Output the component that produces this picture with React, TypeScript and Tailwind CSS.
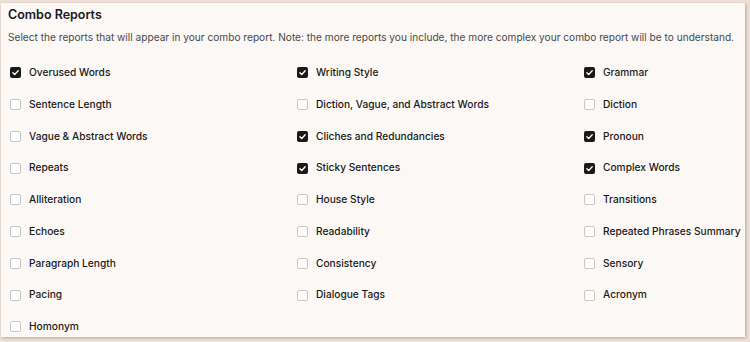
const reports: [string, boolean][] = [
  ["Overused Words", true],
  ["Writing Style", true],
  ["Grammar", true],
  ["Sentence Length", false],
  ["Diction, Vague, and Abstract Words", false],
  ["Diction", false],
  ["Vague & Abstract Words", false],
  ["Cliches and Redundancies", true],
  ["Pronoun", true],
  ["Repeats", false],
  ["Sticky Sentences", true],
  ["Complex Words", true],
  ["Alliteration", false],
  ["House Style", false],
  ["Transitions", false],
  ["Echoes", false],
  ["Readability", false],
  ["Repeated Phrases Summary", false],
  ["Paragraph Length", false],
  ["Consistency", false],
  ["Sensory", false],
  ["Pacing", false],
  ["Dialogue Tags", false],
  ["Acronym", false],
  ["Homonym", false],
];

function Box({ checked }: { checked: boolean }) {
  if (checked) {
    return (
      <span className="flex h-[11px] w-[11px] items-center justify-center rounded-[2px] bg-[#1a1a1a]">
        <svg viewBox="0 0 12 12" className="h-[9px] w-[9px]" fill="none">
          <path d="M2.5 6.2 5 8.6 9.6 3.6" stroke="white" strokeWidth="1.8" strokeLinecap="round" strokeLinejoin="round" />
        </svg>
      </span>
    );
  }
  return <span className="h-[11px] w-[11px] rounded-[2px] border border-[#c9c6c3] bg-white" />;
}

export default function App() {
  return (
    <div className="h-[342px] w-[750px] overflow-hidden bg-[#eee0d6] font-['Inter',sans-serif]">
      <div className="ml-px mt-[3px] h-[334px] w-[744px] bg-[#fcf8f5] pl-[7px] shadow-[1px_1px_3px_rgba(0,0,0,0.25)]">
        <h2 className="pt-[2px] text-[12.5px] font-semibold leading-[20px] text-[#1a1a1a]">Combo Reports</h2>
        <p className="mt-[3px] whitespace-nowrap text-[10.15px] leading-[18px] text-[#4a4a4a]">
          Select the reports that will appear in your combo report. Note: the more reports you include, the more complex your combo report will be to understand.
        </p>
        <div className="mt-[11px] grid grid-cols-[287px_287px_1fr] pl-[2px]">
          {reports.map(([label, checked]) => (
            <div key={label} className="flex h-[31.75px] items-center gap-[8px]">
              <Box checked={checked} />
              <span className="text-[10.2px] font-medium text-[#1a1a1a]">{label}</span>
            </div>
          ))}
        </div>
      </div>
    </div>
  );
}
